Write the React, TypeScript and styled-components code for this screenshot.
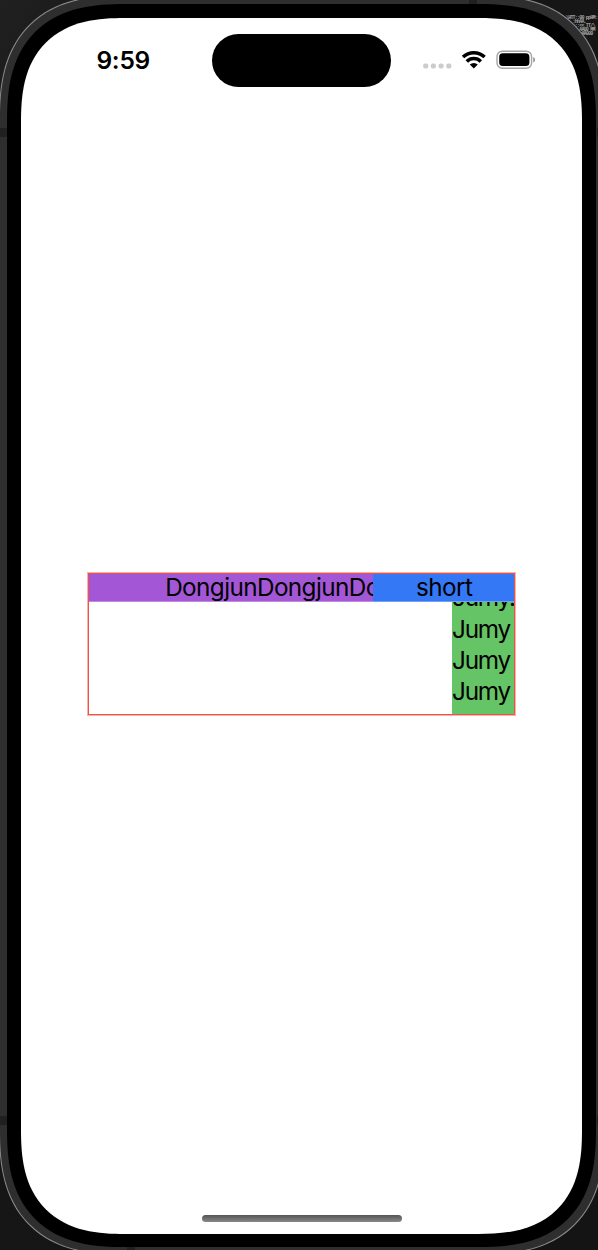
import React from "react";
import styled, { createGlobalStyle, css } from "styled-components";

const GlobalStyle = createGlobalStyle`
  * { box-sizing: border-box; }
  html, body { margin: 0; padding: 0; overflow: hidden; background: #171717; }
`;

const smoothCorner = (radius: number, fallback: number) => css`
  border-radius: ${fallback}px;
  @supports (corner-shape: superellipse(1.35)) {
    border-radius: ${radius}px;
    corner-shape: superellipse(1.35);
  }
`;

const Desktop = styled.main`
  position: relative;
  width: 598px;
  height: 1250px;
  overflow: hidden;
  background: linear-gradient(120deg, #202020, #171717 12%, #141414);
  font-family: Inter, "Liberation Sans", sans-serif;
  color: #000;
`;

const Console = styled.pre`
  position: absolute;
  left: 566px;
  top: 16px;
  margin: 0;
  font: bold 5px/4px "Liberation Mono", monospace;
  letter-spacing: -0.8px;
  color: #a8a8a8;
`;

const Frame = styled.div`
  position: relative;
  width: 606px;
  height: 1260px;
  margin: -5px 0 0 -1px;
  padding: 8px 7px 7px;
  border: 1px solid #8c8c8c;
  background: #2e2e2e;
  ${smoothCorner(126, 108)}
`;

const Band = styled.i<{ $x: number; $y: number; $w: number; $h: number }>`
  position: absolute;
  left: ${(p) => p.$x}px;
  top: ${(p) => p.$y}px;
  width: ${(p) => p.$w}px;
  height: ${(p) => p.$h}px;
  background: #202020;
`;

const Bezel = styled.div`
  position: relative;
  height: 1243px;
  width: 589px;
  padding: 14px 14px 13px;
  background: #000;
  ${smoothCorner(118, 99)}
`;

const Screen = styled.div`
  display: flex;
  flex-direction: column;
  align-items: center;
  height: 1216px;
  background: #fff;
  ${smoothCorner(104, 86)}
`;

const StatusBar = styled.header`
  display: grid;
  grid-template-columns: 191px 179px 191px;
  width: 100%;
  height: 69px;
  padding-top: 16px;
`;

const Clock = styled.time`
  padding-left: 75.5px;
  font-size: 24.5px;
  font-weight: 600;
  line-height: 52px;
  letter-spacing: -0.3px;
`;

const Island = styled.div`
  height: 53px;
  border-radius: 27px;
  background: #000;
`;

const Indicators = styled.div`
  display: flex;
  padding: 14px 0 0 31px;
`;

const Stage = styled.section`
  margin-top: 486px;
  position: relative;
  width: 427px;
  height: 142px;
`;

const Outline = styled.i`
  position: absolute;
  inset: 0;
  border: 1px solid #eb5545;
  box-shadow: 0 0 0 1px rgba(235, 85, 69, 0.45);
`;

const TopRow = styled.div`
  display: flex;
  height: 29px;
`;

const Label = styled.div<{ $color: string; $width: number; $inset: number }>`
  width: ${(p) => p.$width}px;
  padding-left: ${(p) => p.$inset}px;
  overflow: hidden;
  white-space: nowrap;
  background: ${(p) => p.$color};
  box-shadow: inset 0 -1px rgba(255, 255, 255, 0.3);
  font-size: 24.3px;
  line-height: 28px;
  letter-spacing: -0.6px;
`;

const NameColumn = styled.div`
  display: flex;
  flex-direction: column;
  justify-content: flex-end;
  width: 63px;
  height: 113px;
  margin-left: auto;
  padding: 0 0 7.4px;
  overflow: hidden;
  background: #65c466;
  font-size: 24.3px;
  line-height: 31.3px;
  letter-spacing: -1.2px;
`;

const Name = styled.span`
  flex: none;
  white-space: nowrap;
`;

const HomeIndicator = styled.div`
  width: 200px;
  height: 7px;
  margin: auto 0 12px;
  border-radius: 4px;
  background: linear-gradient(#555, #888);
`;

export default function App() {
  return (
    <Desktop>
      <GlobalStyle />
      <Console>{"\\HTT::00 ppHM::\n   :hhAA.\n  --::<< TT/\\\n     .AA00 MM\n      <AA000"}</Console>
      <Frame>
        <Band $x={0} $y={132} $w={7} $h={9} />
        <Band $x={0} $y={1120} $w={7} $h={9} />
        <Band $x={469} $y={0} $w={8} $h={8} />
        <Band $x={597} $y={132} $w={7} $h={9} />
        <Band $x={597} $y={1120} $w={7} $h={9} />
        <Band $x={127} $y={1251} $w={8} $h={7} />
        <Bezel>
          <Screen>
            <StatusBar>
              <Clock>9:59</Clock>
              <Island />
              <Indicators>
                <svg width="115" height="24" viewBox="422 48 115 24">
                  <g fill="#ccc">
                    <rect x="423.2" y="63.5" width="5" height="5" rx="1.8" />
                    <rect x="430.9" y="63.5" width="5" height="5" rx="1.8" />
                    <rect x="438.6" y="63.5" width="5" height="5" rx="1.8" />
                    <rect x="446.3" y="63.5" width="5" height="5" rx="1.8" />
                  </g>
                  <g fill="none" stroke="#000" strokeWidth="3.5">
                    <path d="M463 57.1A15.5 15.5 0 0 1 484.6 57.1" />
                    <path d="M466.8 61.5A9.8 9.8 0 0 1 480.8 61.5" />
                  </g>
                  <path d="M469.8 64.6A5.6 5.6 0 0 1 477.8 64.6L473.8 68.6Z" />
                  <rect x="497" y="51.2" width="34.6" height="17" rx="5.3" fill="none" stroke="#a6a6a6" strokeWidth="1.4" />
                  <rect x="499.2" y="53.3" width="30.2" height="12.8" rx="3.6" />
                  <path d="M533.2 57v5.4c1.1-.4 1.9-1.4 1.9-2.7s-.8-2.3-1.9-2.7Z" fill="#999" />
                </svg>
              </Indicators>
            </StatusBar>
            <Stage>
              <TopRow>
                <Label $color="#a357d7" $width={285} $inset={77.2}>DongjunDongjunDongjun</Label>
                <Label $color="#3478f6" $width={142} $inset={43}>short</Label>
              </TopRow>
              <NameColumn>
                <Name>Jumy.</Name>
                <Name>Jumy</Name>
                <Name>Jumy</Name>
                <Name>Jumy</Name>
              </NameColumn>
              <Outline />
            </Stage>
            <HomeIndicator />
          </Screen>
        </Bezel>
      </Frame>
    </Desktop>
  );
}
